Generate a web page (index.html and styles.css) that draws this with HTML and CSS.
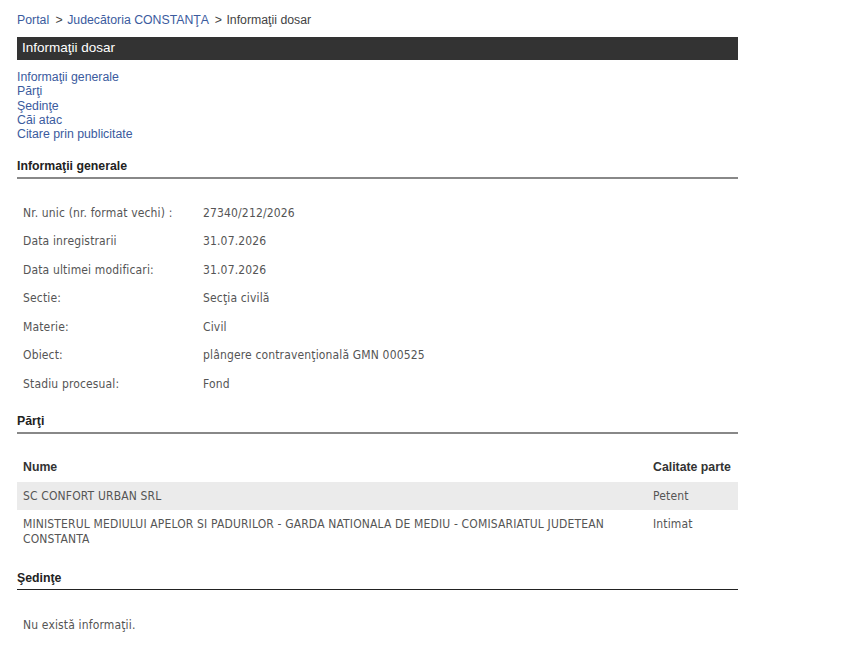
FILE: index.html
```html
<!DOCTYPE html>
<html lang="ro">
<head>
    <meta charset="utf-8">
    <title>Informaţii dosar</title>
    <link rel="stylesheet" href="styles.css">
</head>
<body>
    <div id="content">
        <div class="breadcrumb">
            <a href="#">Portal</a>
            <span class="sep">&gt;</span>
            <a href="#">Judecătoria CONSTANŢA</a>
            <span class="sep">&gt;</span>
            <span class="current">Informaţii dosar</span>
        </div>

        <div class="titleBar">Informaţii dosar</div>

        <ul class="sectionLinks">
            <li><a href="#generale">Informaţii generale</a></li>
            <li><a href="#parti">Părţi</a></li>
            <li><a href="#sedinte">Şedinţe</a></li>
            <li><a href="#cai">Căi atac</a></li>
            <li><a href="#citare">Citare prin publicitate</a></li>
        </ul>

        <h2 class="sectionTitle" id="generale">Informaţii generale</h2>
        <table class="infoTable">
            <tr><td class="label">Nr. unic (nr. format vechi) :</td><td>27340/212/2026</td></tr>
            <tr><td class="label">Data inregistrarii</td><td>31.07.2026</td></tr>
            <tr><td class="label">Data ultimei modificari:</td><td>31.07.2026</td></tr>
            <tr><td class="label">Sectie:</td><td>Secţia civilă</td></tr>
            <tr><td class="label">Materie:</td><td>Civil</td></tr>
            <tr><td class="label">Obiect:</td><td>plângere contravenţională GMN 000525</td></tr>
            <tr><td class="label">Stadiu procesual:</td><td>Fond</td></tr>
        </table>

        <h2 class="sectionTitle" id="parti">Părţi</h2>
        <table class="partiTable">
            <thead>
                <tr><th>Nume</th><th class="calitate">Calitate parte</th></tr>
            </thead>
            <tbody>
                <tr class="odd"><td>SC CONFORT URBAN SRL</td><td>Petent</td></tr>
                <tr><td>MINISTERUL MEDIULUI APELOR SI PADURILOR - GARDA NATIONALA DE MEDIU - COMISARIATUL JUDETEAN CONSTANTA</td><td>Intimat</td></tr>
            </tbody>
        </table>

        <h2 class="sectionTitle dark" id="sedinte">Şedinţe</h2>
        <p class="empty">Nu există informaţii.</p>
    </div>
</body>
</html>
```

FILE: styles.css
```css
body{
    margin: 0;
    background: #fff;
    font-family: "Liberation Sans", Arial, sans-serif;
    font-size: 12px;
    color: #333;
}
#content{
    width: 721px;
    margin-left: 17px;
    padding-top: 12px;
}
a{
    color: #3b5b9e;
    text-decoration: none;
}

.breadcrumb{
    font-size: 12.3px;
    line-height: 16px;
    color: #444;
}
.breadcrumb .sep{
    margin: 0 1px 0 3px;
}

.titleBar{
    margin-top: 9px;
    height: 23px;
    line-height: 22px;
    background: #333;
    color: #fff;
    font-size: 13.5px;
    padding-left: 5px;
}

.sectionLinks{
    list-style: none;
    margin: 10px 0 0 0;
    padding: 0;
    font-size: 12.3px;
    line-height: 14.3px;
}

.sectionTitle{
    font-size: 12.3px;
    font-weight: bold;
    color: #222;
    margin: 0;
    padding-bottom: 4px;
    border-bottom: 2px solid #888;
}
#generale{
    margin-top: 18px;
}
.sectionTitle.dark{
    border-bottom: 1px solid #222;
}

.infoTable, .partiTable, .empty{
    font-family: "DejaVu Sans Condensed", "DejaVu Sans", Tahoma, sans-serif;
    font-size: 12px;
    letter-spacing: 0.15px;
    color: #555;
}
.infoTable, .partiTable{
    width: 100%;
    border-collapse: collapse;
}
.infoTable{
    margin: 19px 0 16px 0;
}
.infoTable td{
    height: 28.5px;
    padding: 0 6px;
}
.infoTable td.label{
    width: 168px;
}

.partiTable{
    margin: 19px 0 18px 0;
}
.partiTable th{
    text-align: left;
    font-family: "Liberation Sans", Arial, sans-serif;
    font-size: 12.3px;
    letter-spacing: 0;
    color: #333;
    height: 29px;
    padding: 0 6px;
}
.partiTable th.calitate{
    width: 80px;
    padding-right: 5px;
    white-space: nowrap;
}
.partiTable td{
    padding: 7px 6px 6px 6px;
    line-height: 15px;
    vertical-align: top;
}
.partiTable tr.odd td{
    background: #ebebeb;
}

.empty{
    margin: 28px 0 0 6px;
}
```
